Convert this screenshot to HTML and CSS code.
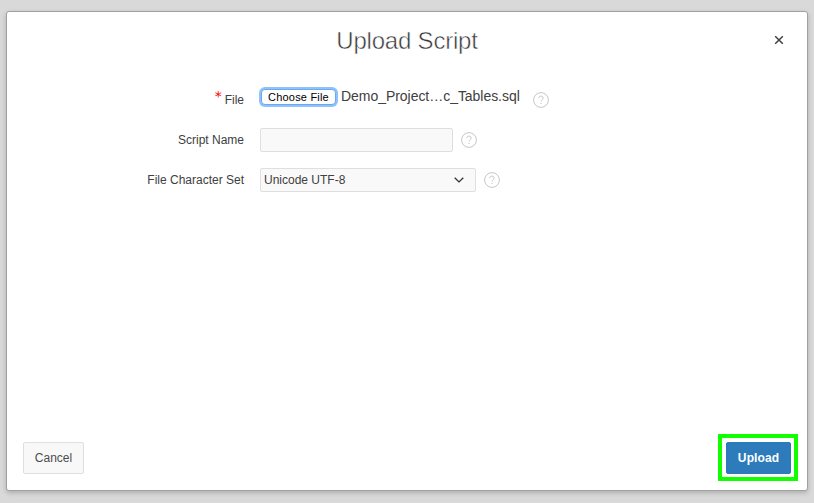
FILE: index.html
```html
<!DOCTYPE html>
<html lang="en">
<head>
<meta charset="utf-8">
<title>Upload Script</title>
<link rel="stylesheet" href="styles.css">
</head>
<body>
<svg class="symbols" aria-hidden="true">
  <symbol id="help" viewBox="0 0 16 16">
    <circle cx="8" cy="8" r="7.4" fill="none" stroke="currentColor"/>
    <path d="M5.8 6.2C5.8 4.9 6.7 4.1 8 4.1s2.2.8 2.2 2c0 1.6-2.1 1.7-2.1 3.4" fill="none" stroke="currentColor"/>
    <circle cx="8.1" cy="11.4" r=".65" fill="currentColor"/>
  </symbol>
</svg>
<main class="dialog">
  <header class="header">
    <h1 class="title">Upload Script</h1>
    <button class="close" aria-label="Close">
      <svg viewBox="0 0 10 10"><path d="M1.2 1.2 8.8 8.8M8.8 1.2 1.2 8.8"/></svg>
    </button>
  </header>
  <form class="form">
    <div class="row">
      <div class="label"><span class="required">*</span>File</div>
      <div class="file"><button type="button" class="choose">Choose File</button><span class="filename">Demo_Project…c_Tables.sql</span></div>
      <svg class="help help-file"><use href="#help"/></svg>
    </div>
    <div class="row">
      <label class="label" for="name">Script Name</label>
      <input class="field" id="name" type="text">
      <svg class="help"><use href="#help"/></svg>
    </div>
    <div class="row">
      <div class="label">File Character Set</div>
      <div class="field select"><span class="value">Unicode UTF-8</span>
        <svg class="chevron" viewBox="0 0 10 6"><path d="M.7.7 5 4.9 9.3.7"/></svg>
      </div>
      <svg class="help"><use href="#help"/></svg>
    </div>
  </form>
  <footer class="footer">
    <button class="button">Cancel</button>
    <div class="highlight"><button class="button primary">Upload</button></div>
  </footer>
</main>
</body>
</html>
```
FILE: styles.css
```css
* { box-sizing: border-box; }
body {
  margin: 0;
  height: 503px;
  padding: 11px 6px 12px;
  overflow: hidden;
  background: #d9d9d9;
  color: #404040;
  font: 12px/16px "Liberation Sans", Arial, sans-serif;
}
button, input { font: inherit; margin: 0; }
.symbols { display: none; }
.dialog {
  display: flex;
  flex-direction: column;
  height: 480px;
  border: 1px solid #a0a0a0;
  border-radius: 3px;
  background: #fff;
  box-shadow: 0 2px 5px rgba(0, 0, 0, .2);
}
.header {
  display: grid;
  grid-template-columns: 40px 1fr 40px;
  align-items: center;
  height: 58px;
  padding-right: 8px;
}
.title {
  grid-column: 2;
  margin: 0;
  padding-left: 8px;
  text-align: center;
  font-size: 24px;
  line-height: 30px;
  font-weight: 300;
  letter-spacing: -.2px;
  color: #383838;
  -webkit-text-stroke: .5px #fff;
}
.close {
  display: flex;
  justify-content: center;
  padding: 0;
  margin-bottom: 2px;
  border: 0;
  background: none;
}
.close svg { width: 10px; height: 10px; }
.close path { fill: none; stroke: #404040; stroke-width: 1.5; }
.form { flex: 1; padding-top: 10px; }
.row { display: flex; align-items: center; height: 40px; }
.label { width: 237px; margin-right: 16px; text-align: right; }
.required {
  position: relative;
  top: -3px;
  margin-right: 3px;
  color: #f00;
  font-family: "DejaVu Sans", sans-serif;
  font-size: 14px;
  line-height: 10px;
}
.file { display: flex; align-items: center; margin-bottom: 6px; }
.choose {
  width: 75px;
  height: 16px;
  margin: 0 5px 0 1px;
  padding: 0;
  border: 1px solid #6ba9ee;
  border-radius: 4px;
  background: #fff;
  box-shadow: 0 0 0 2px #8fc1fa;
  color: #000;
  font-size: 11px;
  line-height: 14px;
  letter-spacing: .2px;
}
.filename {
  width: 179px;
  margin-bottom: 2px;
  font-size: 14px;
  letter-spacing: -.04px;
  white-space: nowrap;
}
.field {
  width: 193px;
  height: 24px;
  padding: 0 4px;
  border: 1px solid #dfdfdf;
  border-radius: 2px;
  background: #f9f9f9;
}
.select {
  display: flex;
  align-items: center;
  justify-content: space-between;
  width: 216px;
  padding: 0 11px 0 3px;
}
.chevron { width: 10px; height: 6px; }
.chevron path { fill: none; stroke: #303030; stroke-width: 1.3; }
.help { width: 16px; height: 16px; margin-left: 8px; color: #c6c6c6; }
.help-file { margin-left: 13px; }
.footer {
  display: flex;
  align-items: flex-start;
  justify-content: space-between;
  height: 56px;
  padding: 0 9px 0 16px;
}
.button {
  width: 61px;
  height: 32px;
  margin-top: 8px;
  padding: 0;
  border: 1px solid #dfdfdf;
  border-radius: 2px;
  background: #f8f8f8;
  color: #4d4d4d;
}
.highlight { padding: 4px 3px 3px 4px; border: 4px solid #12ff00; }
.primary {
  display: block;
  width: 65px;
  margin: 0;
  border-color: #2b78ba;
  background: #2d7bbb;
  color: #fff;
  font-weight: 700;
  letter-spacing: .1px;
}
```
